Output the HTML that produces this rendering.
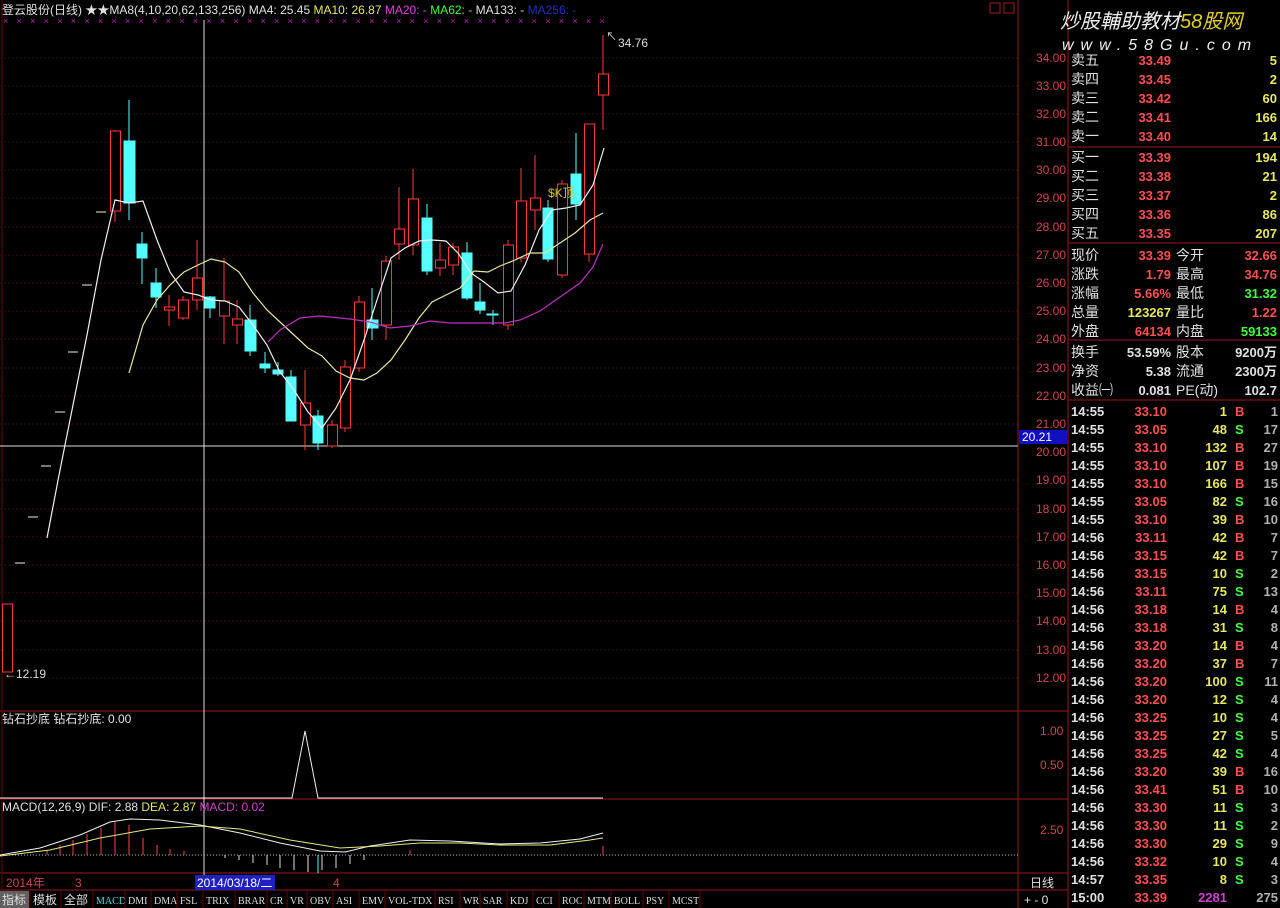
<!DOCTYPE html>
<html><head><meta charset="utf-8"><style>
html,body{margin:0;padding:0;background:#000;width:1280px;height:908px;overflow:hidden}
svg{display:block;font-family:"Liberation Sans","Noto Sans CJK SC",sans-serif}
.r{fill:#ff5050}.y{fill:#e8e860}.g{fill:#40ff40}.w{fill:#e0e0e0}.ax{fill:#d04848;font-size:12px}
.tb{fill:#ddd;font-family:"Liberation Serif","Noto Sans CJK SC",serif;font-size:10px}
</style></head><body>
<svg width="1280" height="908" viewBox="0 0 1280 908">
<!-- grid -->
<g stroke="#3a0a0a" stroke-dasharray="2,2">
<line x1="0" y1="58" x2="1018" y2="58"/><line x1="0" y1="86" x2="1018" y2="86"/><line x1="0" y1="114" x2="1018" y2="114"/><line x1="0" y1="142" x2="1018" y2="142"/><line x1="0" y1="170" x2="1018" y2="170"/><line x1="0" y1="198" x2="1018" y2="198"/><line x1="0" y1="227" x2="1018" y2="227"/><line x1="0" y1="255" x2="1018" y2="255"/><line x1="0" y1="283" x2="1018" y2="283"/><line x1="0" y1="311" x2="1018" y2="311"/><line x1="0" y1="339" x2="1018" y2="339"/><line x1="0" y1="368" x2="1018" y2="368"/><line x1="0" y1="396" x2="1018" y2="396"/><line x1="0" y1="424" x2="1018" y2="424"/><line x1="0" y1="480" x2="1018" y2="480"/><line x1="0" y1="509" x2="1018" y2="509"/><line x1="0" y1="537" x2="1018" y2="537"/><line x1="0" y1="565" x2="1018" y2="565"/><line x1="0" y1="593" x2="1018" y2="593"/><line x1="0" y1="621" x2="1018" y2="621"/><line x1="0" y1="650" x2="1018" y2="650"/><line x1="0" y1="678" x2="1018" y2="678"/>
</g>
<!-- frame -->
<g stroke="#a01818" fill="none">
<line x1="1018" y1="0" x2="1018" y2="890"/><line x1="1068" y1="0" x2="1068" y2="908"/>
<line x1="0" y1="711" x2="1068" y2="711"/><line x1="0" y1="799" x2="1068" y2="799"/><line x1="0" y1="873" x2="1068" y2="873"/><line x1="0" y1="890" x2="1068" y2="890"/>
<line x1="1068" y1="147" x2="1280" y2="147"/><line x1="1068" y1="243" x2="1280" y2="243"/><line x1="1068" y1="340" x2="1280" y2="340"/><line x1="1068" y1="400" x2="1280" y2="400"/>
<line x1="1018" y1="890" x2="1018" y2="908"/>
</g>
<line x1="2" y1="0" x2="2" y2="890" stroke="#600" />
<!-- title -->
<text x="2" y="14" font-size="12" class="w">登云股份(日线) ★★MA8(4,10,20,62,133,256)  MA4: 25.45 <tspan class="y">MA10: 26.87</tspan> <tspan fill="#e040e0">MA20: -</tspan> <tspan class="g">MA62: -</tspan> MA133: - <tspan fill="#2030c0">MA256: -</tspan></text>
<rect x="990" y="3" width="10" height="10" fill="none" stroke="#a02020"/><rect x="1004" y="3" width="10" height="10" fill="none" stroke="#a02020"/>
<text x="3" y="24" font-size="9" fill="#c020c0" letter-spacing="8.3">×××××××××××××××××××××××××××××××××××××××××××××</text>
<!-- watermark -->
<text x="1060" y="28" font-size="20" font-style="italic" fill="#eee">炒股輔助教材<tspan fill="#e0d020">58股网</tspan></text>
<text x="1062" y="50" font-size="16" font-style="italic" fill="#eee" letter-spacing="7">www.58Gu.com</text>
<!-- crosshair -->
<line x1="204" y1="20" x2="204" y2="890" stroke="#ddd"/>
<line x1="0" y1="446" x2="1018" y2="446" stroke="#ddd"/>
<rect x="1019" y="430" width="49" height="14" fill="#1010c0"/><text x="1022" y="441" font-size="12" fill="#fff">20.21</text>
<!-- price axis -->
<g class="ax"><text x="1036" y="62">34.00</text><text x="1036" y="90">33.00</text><text x="1036" y="118">32.00</text><text x="1036" y="146">31.00</text><text x="1036" y="174">30.00</text><text x="1036" y="202">29.00</text><text x="1036" y="231">28.00</text><text x="1036" y="259">27.00</text><text x="1036" y="287">26.00</text><text x="1036" y="315">25.00</text><text x="1036" y="343">24.00</text><text x="1036" y="372">23.00</text><text x="1036" y="400">22.00</text><text x="1036" y="428">21.00</text><text x="1036" y="456">20.00</text><text x="1036" y="484">19.00</text><text x="1036" y="513">18.00</text><text x="1036" y="541">17.00</text><text x="1036" y="569">16.00</text><text x="1036" y="597">15.00</text><text x="1036" y="625">14.00</text><text x="1036" y="654">13.00</text><text x="1036" y="682">12.00</text>
<text x="1040" y="735">1.00</text><text x="1040" y="769">0.50</text><text x="1040" y="834">2.50</text></g>
<!-- one-price bars -->
<g stroke="#eee"><line x1="15" y1="563" x2="25" y2="563"/><line x1="28" y1="517" x2="38" y2="517"/><line x1="41" y1="466" x2="51" y2="466"/><line x1="55" y1="412" x2="65" y2="412"/><line x1="68" y1="352" x2="78" y2="352"/><line x1="82" y1="285" x2="92" y2="285"/><line x1="96" y1="212" x2="106" y2="212"/></g>
<!-- red candles -->
<g stroke="#ff3838" fill="#000">
<line x1="7" y1="604" x2="7" y2="672"/><rect x="2.5" y="604" width="10" height="68"/>
<line x1="115" y1="130" x2="115" y2="222"/><rect x="110.5" y="131" width="10" height="80"/>
<line x1="169" y1="295" x2="169" y2="326"/><rect x="164.5" y="307" width="10" height="3"/>
<line x1="183" y1="296" x2="183" y2="320"/><rect x="178.5" y="300" width="10" height="18"/>
<line x1="197" y1="240" x2="197" y2="310"/><rect x="192.5" y="278" width="10" height="22"/>
<line x1="224" y1="258" x2="224" y2="344"/><rect x="219.5" y="301" width="10" height="15"/>
<line x1="237" y1="300" x2="237" y2="344"/><rect x="232.5" y="319" width="10" height="6"/>
<line x1="305" y1="370" x2="305" y2="450"/><rect x="300.5" y="403" width="10" height="22"/>
<line x1="332" y1="420" x2="332" y2="448"/><rect x="327.5" y="425" width="10" height="21"/>
<line x1="345" y1="360" x2="345" y2="432"/><rect x="340.5" y="367" width="10" height="61"/>
<line x1="359" y1="296" x2="359" y2="372"/><rect x="354.5" y="302" width="10" height="66"/>
<line x1="386" y1="256" x2="386" y2="340"/><rect x="381.5" y="261" width="10" height="64"/>
<line x1="399" y1="187" x2="399" y2="260"/><rect x="394.5" y="229" width="10" height="15"/>
<line x1="413" y1="169" x2="413" y2="255"/><rect x="408.5" y="199" width="10" height="46"/>
<line x1="440" y1="243" x2="440" y2="276"/><rect x="435.5" y="260" width="10" height="8"/>
<line x1="453" y1="243" x2="453" y2="275"/><rect x="448.5" y="247" width="10" height="18"/>
<line x1="508" y1="240" x2="508" y2="330"/><rect x="503.5" y="245" width="10" height="80"/>
<line x1="521" y1="168" x2="521" y2="262"/><rect x="516.5" y="201" width="10" height="57"/>
<line x1="535" y1="155" x2="535" y2="230"/><rect x="530.5" y="198" width="10" height="12"/>
<line x1="562" y1="180" x2="562" y2="278"/><rect x="557.5" y="184" width="10" height="91"/>
<line x1="589" y1="124" x2="589" y2="262"/><rect x="584.5" y="124" width="10" height="130"/>
<line x1="603" y1="35" x2="603" y2="130"/><rect x="598.5" y="74" width="10" height="21"/>
</g>
<!-- cyan candles -->
<g stroke="#54ffff" fill="#54ffff">
<line x1="129" y1="100" x2="129" y2="220"/><rect x="124" y="141" width="11" height="62"/>
<line x1="142" y1="232" x2="142" y2="284"/><rect x="137" y="244" width="10" height="14"/>
<line x1="156" y1="268" x2="156" y2="308"/><rect x="151" y="283" width="10" height="14"/>
<line x1="210" y1="296" x2="210" y2="318"/><rect x="205" y="297" width="10" height="11"/>
<line x1="250" y1="305" x2="250" y2="356"/><rect x="245" y="320" width="11" height="31"/>
<line x1="265" y1="352" x2="265" y2="373"/><rect x="260" y="364" width="10" height="4"/>
<line x1="278" y1="362" x2="278" y2="376"/><rect x="273" y="370" width="10" height="4"/>
<line x1="291" y1="370" x2="291" y2="421"/><rect x="286" y="377" width="10" height="44"/>
<line x1="318" y1="410" x2="318" y2="450"/><rect x="313" y="416" width="10" height="27"/>
<line x1="372" y1="288" x2="372" y2="340"/><rect x="367" y="320" width="11" height="8"/>
<line x1="427" y1="204" x2="427" y2="275"/><rect x="422" y="218" width="10" height="53"/>
<line x1="467" y1="242" x2="467" y2="300"/><rect x="462" y="253" width="10" height="45"/>
<line x1="480" y1="283" x2="480" y2="314"/><rect x="475" y="302" width="10" height="8"/>
<line x1="493" y1="310" x2="493" y2="325"/><rect x="487" y="314" width="11" height="1"/>
<line x1="548" y1="200" x2="548" y2="262"/><rect x="543" y="208" width="10" height="51"/>
<line x1="576" y1="133" x2="576" y2="220"/><rect x="571" y="174" width="10" height="30"/>
</g>
<!-- MAs -->
<polyline fill="none" stroke="#f0f0f0" stroke-width="1.2" points="47,538 60,470 73,405 87,335 101,260 115,200 129,203 143,201 157,240 170,272 184,292 198,295 211,300 225,301 239,307 253,325 267,345 280,372 294,390 308,412 322,428 336,408 350,380 364,340 377,300 391,258 405,248 419,241 432,240 446,241 458,253 471,273 484,282 498,293 511,291 525,265 539,230 552,210 566,208 580,205 593,185 604,148"/>
<polyline fill="none" stroke="#e8e8a0" stroke-width="1.2" points="129,373 143,325 157,300 170,285 184,272 198,265 211,259 225,262 239,272 253,293 267,310 280,322 294,335 308,348 322,356 336,371 350,378 364,380 377,373 391,360 405,340 419,318 432,302 446,295 460,288 474,271 488,272 500,266 515,260 530,253 545,253 560,243 575,233 590,220 603,213"/>
<polyline fill="none" stroke="#c030c0" stroke-width="1.2" points="268,342 280,330 300,318 320,316 350,319 370,322 390,328 410,326 430,321 450,323 470,323 490,323 505,323 520,320 540,311 560,297 580,283 593,267 603,244"/>
<text x="548" y="197" font-size="12" fill="#e0c020">$K顶</text>
<text x="606" y="40" font-size="11" fill="#ddd">↖</text><text x="618" y="47" font-size="12" fill="#ddd">34.76</text>
<text x="4" y="678" font-size="12" fill="#ddd">←12.19</text>
<!-- indicator 1 -->
<text x="2" y="723" font-size="12" class="w">钻石抄底 钻石抄底: 0.00</text>
<polyline fill="none" stroke="#f0f0f0" points="0,798 292,798 305,731 318,798 603,798"/>
<!-- MACD -->
<text x="2" y="811" font-size="12" class="w">MACD(12,26,9) DIF: 2.88 <tspan class="y">DEA: 2.87</tspan> <tspan fill="#d040d0">MACD: 0.02</tspan></text>
<line x1="0" y1="855" x2="1018" y2="855" stroke="#bbb" stroke-dasharray="1,2"/>
<g stroke="#ff4040"><line x1="47" y1="855" x2="47" y2="850"/><line x1="60" y1="855" x2="60" y2="845"/><line x1="73" y1="855" x2="73" y2="840"/><line x1="87" y1="855" x2="87" y2="834"/><line x1="101" y1="855" x2="101" y2="828"/><line x1="115" y1="855" x2="115" y2="822"/><line x1="129" y1="855" x2="129" y2="825"/><line x1="143" y1="855" x2="143" y2="838"/><line x1="157" y1="855" x2="157" y2="845"/><line x1="170" y1="855" x2="170" y2="849"/><line x1="184" y1="855" x2="184" y2="851"/><line x1="410" y1="855" x2="410" y2="850"/><line x1="603" y1="855" x2="603" y2="846"/></g>
<g stroke="#e0e0e0"><line x1="225" y1="855" x2="225" y2="858"/><line x1="239" y1="855" x2="239" y2="860"/><line x1="253" y1="855" x2="253" y2="863"/><line x1="267" y1="855" x2="267" y2="865"/><line x1="280" y1="855" x2="280" y2="868"/><line x1="294" y1="855" x2="294" y2="870"/><line x1="308" y1="855" x2="308" y2="872"/><line x1="322" y1="855" x2="322" y2="870"/><line x1="336" y1="855" x2="336" y2="868"/><line x1="350" y1="855" x2="350" y2="864"/><line x1="364" y1="855" x2="364" y2="860"/></g>
<line x1="318" y1="855" x2="318" y2="873" stroke="#54ffff"/>
<polyline fill="none" stroke="#f0f0f0" points="0,855 40,848 80,835 110,822 130,819 160,820 200,825 240,833 280,843 320,851 345,852 370,846 410,840 450,841 500,844 540,843 580,839 603,833"/>
<polyline fill="none" stroke="#e8e880" points="0,856 50,850 100,838 150,829 200,826 240,829 290,840 340,848 380,846 420,843 460,843 500,845 550,845 590,840 603,838"/>
<!-- date bar -->
<text x="6" y="887" font-size="12" fill="#d04848">2014年</text><text x="75" y="887" font-size="12" fill="#d04848">3</text>
<rect x="195" y="875" width="80" height="15" fill="#2020c0"/><text x="197" y="887" font-size="12" fill="#fff">2014/03/18/二</text>
<text x="333" y="887" font-size="12" fill="#d04848">4</text>
<text x="1030" y="887" font-size="12" class="w">日线</text>
<!-- tab bar -->
<rect x="0" y="891" width="29" height="17" fill="#606060"/>
<g font-size="12" class="w"><text x="2" y="904">指标</text><text x="33" y="904">模板</text><text x="64" y="904">全部</text></g>
<g class="tb"><text x="96" y="904" style="fill:#40e0e0">MACD</text><text x="128" y="904">DMI</text><text x="154" y="904">DMA</text><text x="180" y="904">FSL</text><text x="206" y="904">TRIX</text><text x="238" y="904">BRAR</text><text x="270" y="904">CR</text><text x="290" y="904">VR</text><text x="310" y="904">OBV</text><text x="336" y="904">ASI</text><text x="362" y="904">EMV</text><text x="388" y="904">VOL-TDX</text><text x="438" y="904">RSI</text><text x="463" y="904">WR</text><text x="483" y="904">SAR</text><text x="510" y="904">KDJ</text><text x="536" y="904">CCI</text><text x="562" y="904">ROC</text><text x="587" y="904">MTM</text><text x="614" y="904">BOLL</text><text x="646" y="904">PSY</text><text x="672" y="904">MCST</text></g>
<g stroke="#600"><line x1="30" y1="891" x2="30" y2="908"/><line x1="61" y1="891" x2="61" y2="908"/><line x1="93" y1="891" x2="93" y2="908"/><line x1="125" y1="891" x2="125" y2="908"/><line x1="151" y1="891" x2="151" y2="908"/><line x1="177" y1="891" x2="177" y2="908"/><line x1="203" y1="891" x2="203" y2="908"/><line x1="235" y1="891" x2="235" y2="908"/><line x1="267" y1="891" x2="267" y2="908"/><line x1="287" y1="891" x2="287" y2="908"/><line x1="307" y1="891" x2="307" y2="908"/><line x1="333" y1="891" x2="333" y2="908"/><line x1="359" y1="891" x2="359" y2="908"/><line x1="385" y1="891" x2="385" y2="908"/><line x1="435" y1="891" x2="435" y2="908"/><line x1="460" y1="891" x2="460" y2="908"/><line x1="480" y1="891" x2="480" y2="908"/><line x1="507" y1="891" x2="507" y2="908"/><line x1="533" y1="891" x2="533" y2="908"/><line x1="559" y1="891" x2="559" y2="908"/><line x1="584" y1="891" x2="584" y2="908"/><line x1="611" y1="891" x2="611" y2="908"/><line x1="643" y1="891" x2="643" y2="908"/><line x1="669" y1="891" x2="669" y2="908"/><line x1="700" y1="891" x2="700" y2="908"/></g>
<text x="1024" y="904" font-size="12" class="w">+   -   0</text>
<!-- right panel order book -->
<g font-size="14">
<g class="w"><text x="1071" y="65">卖五</text><text x="1071" y="84">卖四</text><text x="1071" y="103">卖三</text><text x="1071" y="122">卖二</text><text x="1071" y="141">卖一</text><text x="1071" y="162">买一</text><text x="1071" y="181">买二</text><text x="1071" y="200">买三</text><text x="1071" y="219">买四</text><text x="1071" y="238">买五</text></g>
<g class="r" text-anchor="end" font-weight="bold" font-size="13"><text x="1171" y="65">33.49</text><text x="1171" y="84">33.45</text><text x="1171" y="103">33.42</text><text x="1171" y="122">33.41</text><text x="1171" y="141">33.40</text><text x="1171" y="162">33.39</text><text x="1171" y="181">33.38</text><text x="1171" y="200">33.37</text><text x="1171" y="219">33.36</text><text x="1171" y="238">33.35</text></g>
<g class="y" text-anchor="end" font-weight="bold" font-size="13"><text x="1277" y="65">5</text><text x="1277" y="84">2</text><text x="1277" y="103">60</text><text x="1277" y="122">166</text><text x="1277" y="141">14</text><text x="1277" y="162">194</text><text x="1277" y="181">21</text><text x="1277" y="200">2</text><text x="1277" y="219">86</text><text x="1277" y="238">207</text></g>
<g class="w"><text x="1071" y="260">现价</text><text x="1071" y="279">涨跌</text><text x="1071" y="298">涨幅</text><text x="1071" y="317">总量</text><text x="1071" y="336">外盘</text><text x="1071" y="357">换手</text><text x="1071" y="376">净资</text><text x="1071" y="395">收益㈠</text>
<text x="1176" y="260">今开</text><text x="1176" y="279">最高</text><text x="1176" y="298">最低</text><text x="1176" y="317">量比</text><text x="1176" y="336">内盘</text><text x="1176" y="357">股本</text><text x="1176" y="376">流通</text><text x="1176" y="395">PE(动)</text></g>
<g text-anchor="end" font-weight="bold" font-size="13"><text x="1171" y="260" class="r">33.39</text><text x="1171" y="279" class="r">1.79</text><text x="1171" y="298" class="r">5.66%</text><text x="1171" y="317" class="y">123267</text><text x="1171" y="336" class="r">64134</text><text x="1171" y="357" class="w">53.59%</text><text x="1171" y="376" class="w">5.38</text><text x="1171" y="395" class="w">0.081</text>
<text x="1277" y="260" class="r">32.66</text><text x="1277" y="279" class="r">34.76</text><text x="1277" y="298" class="g">31.32</text><text x="1277" y="317" class="r">1.22</text><text x="1277" y="336" class="g">59133</text><text x="1277" y="376" class="w">2300万</text><text x="1277" y="357" class="w">9200万</text><text x="1277" y="395" class="w">102.7</text></g>
</g>
<!-- ticks -->
<g font-size="13" font-weight="bold">
<g class="w"><text x="1071" y="416">14:55</text><text x="1071" y="434">14:55</text><text x="1071" y="452">14:55</text><text x="1071" y="470">14:55</text><text x="1071" y="488">14:55</text><text x="1071" y="506">14:55</text><text x="1071" y="524">14:55</text><text x="1071" y="542">14:56</text><text x="1071" y="560">14:56</text><text x="1071" y="578">14:56</text><text x="1071" y="596">14:56</text><text x="1071" y="614">14:56</text><text x="1071" y="632">14:56</text><text x="1071" y="650">14:56</text><text x="1071" y="668">14:56</text><text x="1071" y="686">14:56</text><text x="1071" y="704">14:56</text><text x="1071" y="722">14:56</text><text x="1071" y="740">14:56</text><text x="1071" y="758">14:56</text><text x="1071" y="776">14:56</text><text x="1071" y="794">14:56</text><text x="1071" y="812">14:56</text><text x="1071" y="830">14:56</text><text x="1071" y="848">14:56</text><text x="1071" y="866">14:56</text><text x="1071" y="884">14:57</text><text x="1071" y="902">15:00</text></g>
<g class="r" text-anchor="end"><text x="1167" y="416">33.10</text><text x="1167" y="434">33.05</text><text x="1167" y="452">33.10</text><text x="1167" y="470">33.10</text><text x="1167" y="488">33.10</text><text x="1167" y="506">33.05</text><text x="1167" y="524">33.10</text><text x="1167" y="542">33.11</text><text x="1167" y="560">33.15</text><text x="1167" y="578">33.15</text><text x="1167" y="596">33.11</text><text x="1167" y="614">33.18</text><text x="1167" y="632">33.18</text><text x="1167" y="650">33.20</text><text x="1167" y="668">33.20</text><text x="1167" y="686">33.20</text><text x="1167" y="704">33.20</text><text x="1167" y="722">33.25</text><text x="1167" y="740">33.25</text><text x="1167" y="758">33.25</text><text x="1167" y="776">33.20</text><text x="1167" y="794">33.41</text><text x="1167" y="812">33.30</text><text x="1167" y="830">33.30</text><text x="1167" y="848">33.30</text><text x="1167" y="866">33.32</text><text x="1167" y="884">33.35</text><text x="1167" y="902">33.39</text></g>
<g class="y" text-anchor="end"><text x="1227" y="416">1</text><text x="1227" y="434">48</text><text x="1227" y="452">132</text><text x="1227" y="470">107</text><text x="1227" y="488">166</text><text x="1227" y="506">82</text><text x="1227" y="524">39</text><text x="1227" y="542">42</text><text x="1227" y="560">42</text><text x="1227" y="578">10</text><text x="1227" y="596">75</text><text x="1227" y="614">14</text><text x="1227" y="632">31</text><text x="1227" y="650">14</text><text x="1227" y="668">37</text><text x="1227" y="686">100</text><text x="1227" y="704">12</text><text x="1227" y="722">10</text><text x="1227" y="740">27</text><text x="1227" y="758">42</text><text x="1227" y="776">39</text><text x="1227" y="794">51</text><text x="1227" y="812">11</text><text x="1227" y="830">11</text><text x="1227" y="848">29</text><text x="1227" y="866">10</text><text x="1227" y="884">8</text><text x="1227" y="902" style="fill:#d040d0">2281</text></g>
<g><text x="1235" y="416" class="r">B</text><text x="1235" y="434" class="g">S</text><text x="1235" y="452" class="r">B</text><text x="1235" y="470" class="r">B</text><text x="1235" y="488" class="r">B</text><text x="1235" y="506" class="g">S</text><text x="1235" y="524" class="r">B</text><text x="1235" y="542" class="r">B</text><text x="1235" y="560" class="r">B</text><text x="1235" y="578" class="g">S</text><text x="1235" y="596" class="g">S</text><text x="1235" y="614" class="r">B</text><text x="1235" y="632" class="g">S</text><text x="1235" y="650" class="r">B</text><text x="1235" y="668" class="r">B</text><text x="1235" y="686" class="g">S</text><text x="1235" y="704" class="g">S</text><text x="1235" y="722" class="g">S</text><text x="1235" y="740" class="g">S</text><text x="1235" y="758" class="g">S</text><text x="1235" y="776" class="r">B</text><text x="1235" y="794" class="r">B</text><text x="1235" y="812" class="g">S</text><text x="1235" y="830" class="g">S</text><text x="1235" y="848" class="g">S</text><text x="1235" y="866" class="g">S</text><text x="1235" y="884" class="g">S</text></g>
<g fill="#b0b0b0" text-anchor="end"><text x="1278" y="416">1</text><text x="1278" y="434">17</text><text x="1278" y="452">27</text><text x="1278" y="470">19</text><text x="1278" y="488">15</text><text x="1278" y="506">16</text><text x="1278" y="524">10</text><text x="1278" y="542">7</text><text x="1278" y="560">7</text><text x="1278" y="578">2</text><text x="1278" y="596">13</text><text x="1278" y="614">4</text><text x="1278" y="632">8</text><text x="1278" y="650">4</text><text x="1278" y="668">7</text><text x="1278" y="686">11</text><text x="1278" y="704">4</text><text x="1278" y="722">4</text><text x="1278" y="740">5</text><text x="1278" y="758">4</text><text x="1278" y="776">16</text><text x="1278" y="794">10</text><text x="1278" y="812">3</text><text x="1278" y="830">2</text><text x="1278" y="848">9</text><text x="1278" y="866">4</text><text x="1278" y="884">3</text><text x="1278" y="902">275</text></g>
</g>
</svg>
</body></html>
